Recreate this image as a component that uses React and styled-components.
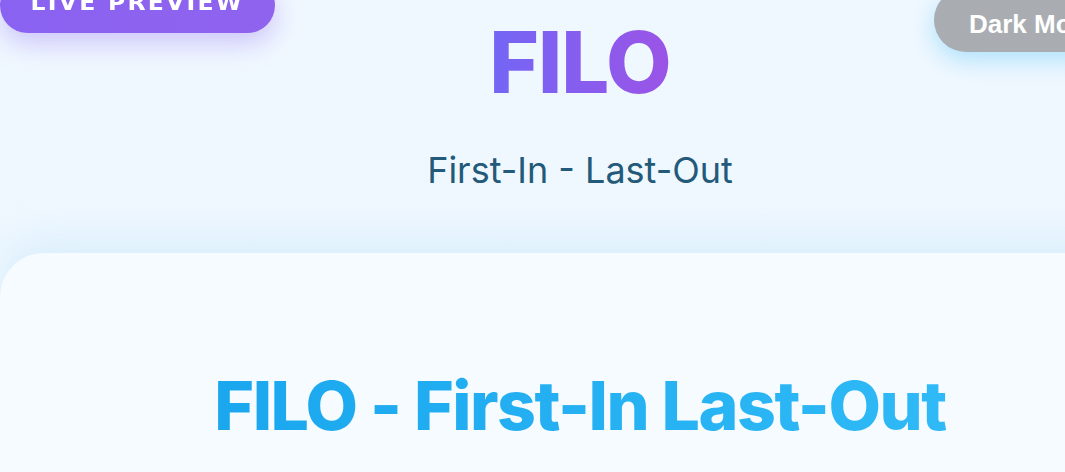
import React from 'react';
import styled, { createGlobalStyle } from 'styled-components';

const GlobalStyle = createGlobalStyle`
  html, body {
    margin: 0;
    padding: 0;
    background: #eff8ff;
    overflow: hidden;
  }
  * { box-sizing: border-box; }
`;

const Page = styled.div`
  position: relative;
  width: 1160px;
  min-height: 472px;
  background: linear-gradient(180deg, #f0f8ff 0%, #eef7fe 100%);
  font-family: Inter, "Noto Sans", sans-serif;
`;

// floating pill in the top-left corner
const PreviewButton = styled.button`
  position: absolute;
  top: -22px;
  left: 0;
  width: 275px;
  height: 55px;
  border: none;
  border-radius: 28px;
  background: linear-gradient(90deg, #8a62f1, #8f63ee);
  color: #fff;
  font-family: "DejaVu Sans", sans-serif;
  font-weight: 700;
  font-size: 21px;
  letter-spacing: 2px;
  text-transform: uppercase;
  padding: 0 0 6px;
  box-shadow: 0 10px 26px rgba(139, 99, 241, 0.35);
`;

const PreviewLabel = styled.span`
  display: inline-block;
  transform: scaleX(1.12);
`;

const ThemeButton = styled.button`
  position: absolute;
  top: -12px;
  left: 934px;
  width: 210px;
  height: 64px;
  border: none;
  border-radius: 32px;
  background: #a9adb2;
  color: #fff;
  font-family: "Liberation Sans", Arial, sans-serif;
  font-weight: 700;
  font-size: 26px;
  text-align: left;
  padding: 8px 0 0 35px;
  box-shadow: 0 8px 24px rgba(120, 205, 250, 0.55);
`;

const Header = styled.header`
  display: flex;
  flex-direction: column;
  align-items: center;
  padding-top: 18px;
  height: 240px;
`;

const Logo = styled.h1`
  margin: 0;
  font-size: 85px;
  font-weight: 800;
  line-height: 90px;
  letter-spacing: -1px;
  background: linear-gradient(90deg, #7366f6 0%, #9b54e6 100%);
  -webkit-background-clip: text;
  background-clip: text;
  color: transparent;
`;

const Tagline = styled.p`
  margin: 41px 0 0;
  font-size: 36px;
  font-weight: 400;
  line-height: 42px;
  color: #245a79;
`;

const Card = styled.main`
  margin-top: 13px;
  min-height: 240px;
  border-radius: 44px 44px 0 0;
  background: #f5fbff;
  box-shadow: 0 -14px 36px rgba(200, 232, 252, 0.55);
  display: flex;
  flex-direction: column;
  align-items: center;
  padding-top: 116px;
`;

const Heading = styled.h2`
  margin: 0;
  font-size: 68px;
  font-weight: 800;
  line-height: 72px;
  letter-spacing: -1.5px;
  background: linear-gradient(90deg, #1aa7ee 0%, #2fb9f6 100%);
  -webkit-background-clip: text;
  background-clip: text;
  color: transparent;
`;

export default function App() {
  return (
    <>
      <GlobalStyle />
      <Page>
        <PreviewButton>
          <PreviewLabel>Live Preview</PreviewLabel>
        </PreviewButton>
        <ThemeButton>Dark Mode</ThemeButton>
        <Header>
          <Logo>FILO</Logo>
          <Tagline>First-In - Last-Out</Tagline>
        </Header>
        <Card>
          <Heading>FILO - First-In Last-Out</Heading>
        </Card>
      </Page>
    </>
  );
}
